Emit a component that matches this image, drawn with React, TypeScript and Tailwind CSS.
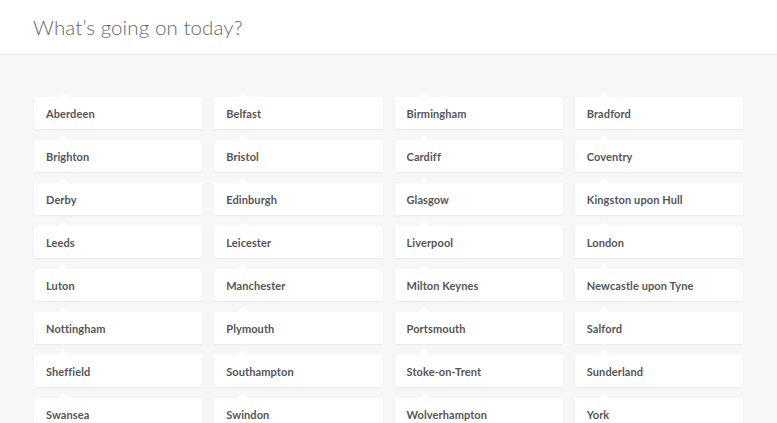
import React from "react";

const cities = [
  "Aberdeen", "Belfast", "Birmingham", "Bradford",
  "Brighton", "Bristol", "Cardiff", "Coventry",
  "Derby", "Edinburgh", "Glasgow", "Kingston upon Hull",
  "Leeds", "Leicester", "Liverpool", "London",
  "Luton", "Manchester", "Milton Keynes", "Newcastle upon Tyne",
  "Nottingham", "Plymouth", "Portsmouth", "Salford",
  "Sheffield", "Southampton", "Stoke-on-Trent", "Sunderland",
  "Swansea", "Swindon", "Wolverhampton", "York",
];

export default function App() {
  return (
    <div className="min-h-[423px] bg-[#f7f7f7] font-['Lato','Noto_Sans',sans-serif]">
      <header className="h-[55px] bg-white border-b border-[#ebebeb] flex items-center px-[33px]">
        <h1 className="text-[20.5px] font-light text-[#666] tracking-[0.1px]">What’s going on today?</h1>
      </header>
      <div className="grid grid-cols-4 gap-x-[12px] gap-y-[11px] pl-[34px] pr-[34px] pt-[42px]">
        {cities.map((c) => (
          <div key={c} className="relative h-[32px] bg-white shadow-[0_1px_2px_rgba(0,0,0,0.06)] flex items-center pl-[12px] pt-[2px]">
            <div className="absolute -top-[5px] left-[24px] w-0 h-0 border-l-[5px] border-r-[5px] border-b-[5px] border-l-transparent border-r-transparent border-b-white" />
            <span className="text-[11px] font-bold text-[#555] tracking-[0.1px]">{c}</span>
          </div>
        ))}
      </div>
    </div>
  );
}
